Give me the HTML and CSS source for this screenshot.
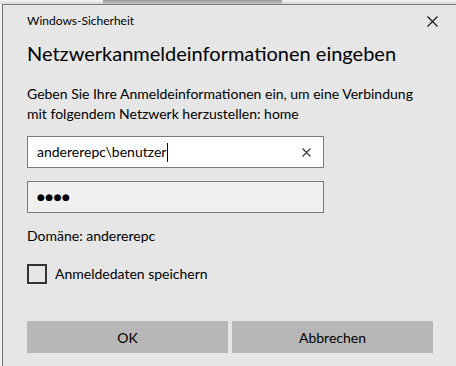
FILE: index.html
```html
<!DOCTYPE html>
<html lang="de">
<head>
<meta charset="utf-8">
<link rel="stylesheet" href="styles.css">
</head>
<body>
<div class="backdrop"><div class="backdrop-bar"></div></div>
<div class="dialog">
  <div class="titlebar">
    <span class="app-title">Windows-Sicherheit</span>
    <svg class="close" width="11" height="11" viewBox="0 0 11 11"><path d="M0.5 0.5 L10.5 10.5 M10.5 0.5 L0.5 10.5" stroke="#111" stroke-width="1.1" fill="none"/></svg>
  </div>
  <h1 class="heading">Netzwerkanmeldeinformationen eingeben</h1>
  <p class="message">Geben Sie Ihre Anmeldeinformationen ein, um eine Verbindung mit folgendem Netzwerk herzustellen: home</p>
  <div class="field field-user">
    <span class="value">andererepc\benutzer<span class="caret"></span></span>
    <svg class="clear" width="9" height="9" viewBox="0 0 9 9"><path d="M0.5 0.5 L8.5 8.5 M8.5 0.5 L0.5 8.5" stroke="#333" stroke-width="1.1" fill="none"/></svg>
  </div>
  <div class="field field-pass">
    <span class="dots">●●●●</span>
  </div>
  <div class="domain">Domäne: andererepc</div>
  <label class="check-row">
    <span class="checkbox"></span>
    <span class="check-label">Anmeldedaten speichern</span>
  </label>
  <div class="buttons">
    <button class="btn">OK</button>
    <button class="btn">Abbrechen</button>
  </div>
</div>
</body>
</html>
```

FILE: styles.css
```css
html, body {
  margin: 0;
  padding: 0;
  height: 100%;
  overflow: hidden;
}
body {
  background: #f2f2f2;
  font-family: Lato, "Noto Sans", sans-serif;
  color: #000;
  display: flex;
  flex-direction: column;
}
.backdrop {
  height: 4px;
  background: linear-gradient(#f4f4f4, #d6d6d6);
  position: relative;
  flex: none;
}
.backdrop-bar {
  position: absolute;
  left: 103px;
  width: 179px;
  top: 0;
  height: 4px;
  background: linear-gradient(#9a9a9a, #c6c6c6);
}
.dialog {
  flex: 1;
  margin-left: 2px;
  border-top: 1px solid #7a7a7a;
  border-left: 1px solid #6f6f6f;
  background: #e6e6e6;
  padding-left: 24px;
  display: flex;
  flex-direction: column;
  align-items: flex-start;
}
.titlebar {
  align-self: stretch;
  display: flex;
  justify-content: space-between;
  align-items: center;
  padding-top: 8px;
  padding-right: 18px;
  height: 16px;
}
.app-title {
  font-size: 12px;
  line-height: 16px;
}
.close { display: block; }
.heading {
  margin: 10px 0 0;
  font-weight: normal;
  font-size: 20px;
  line-height: 28px;
}
.message {
  margin: 17px 0 0;
  font-size: 14px;
  line-height: 20px;
  width: 395px;
}
.field {
  box-sizing: border-box;
  width: 297px;
  height: 32px;
  border: 1px solid #7a7a7a;
  display: flex;
  align-items: center;
  padding: 0 12px 0 9px;
}
.field-user {
  margin-top: 12px;
  background: #fff;
  justify-content: space-between;
}
.field-pass {
  margin-top: 13px;
  background: #f0f0f0;
}
.value {
  font-size: 14px;
  line-height: 20px;
  display: flex;
  align-items: center;
}
.caret {
  display: inline-block;
  width: 1px;
  height: 19px;
  background: #000;
  margin-left: 1px;
}
.dots {
  font-family: "DejaVu Sans", sans-serif;
  font-size: 9px;
  letter-spacing: 0.5px;
}
.domain {
  margin-top: 13px;
  font-size: 14px;
  line-height: 20px;
}
.check-row {
  margin-top: 18px;
  display: flex;
  align-items: center;
}
.checkbox {
  box-sizing: border-box;
  width: 20px;
  height: 20px;
  border: 2px solid #333;
}
.check-label {
  margin-left: 8px;
  font-size: 14px;
  line-height: 20px;
}
.buttons {
  margin-top: 37px;
  display: flex;
  gap: 4px;
}
.btn {
  width: 201px;
  height: 32px;
  border: none;
  background: #b7b7b7;
  font-family: inherit;
  font-size: 14px;
  color: #000;
  padding: 0;
}
```
